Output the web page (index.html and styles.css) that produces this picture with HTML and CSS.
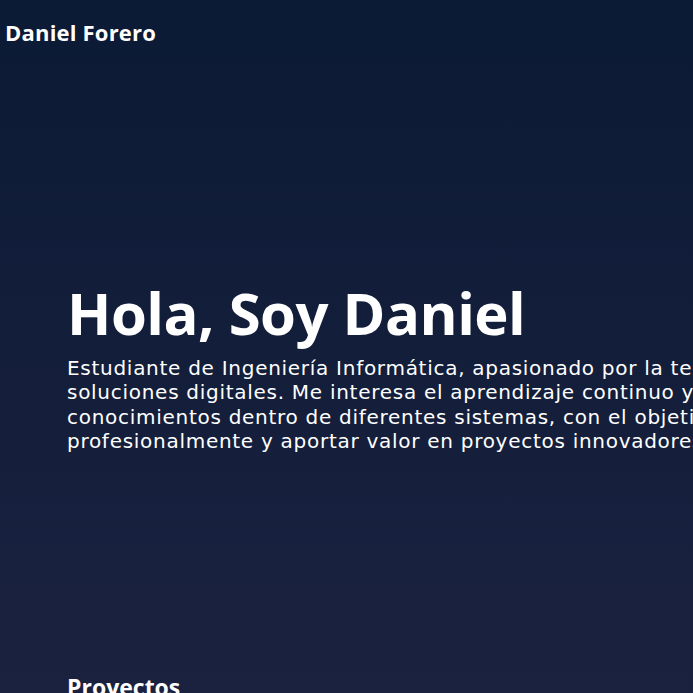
FILE: index.html
```html
<!DOCTYPE html>
<html lang="es">
<head>
<meta charset="utf-8">
<title>Daniel Forero</title>
<link rel="stylesheet" href="styles.css">
</head>
<body>
<header class="site-header">
  <span class="brand">Daniel Forero</span>
</header>
<main>
  <section class="hero">
    <h1 class="hero-title">Hola, Soy Daniel</h1>
    <p class="hero-text">Estudiante de Ingeniería Informática, apasionado por la tecnología y el desarrollo de<br>soluciones digitales. Me interesa el aprendizaje continuo y la aplicación de<br>conocimientos dentro de diferentes sistemas, con el objetivo de crecer<br>profesionalmente y aportar valor en proyectos innovadores.</p>
  </section>
  <section class="projects">
    <h2 class="section-title">Proyectos</h2>
  </section>
</main>
</body>
</html>
```

FILE: styles.css
```css
html, body {
  margin: 0;
  padding: 0;
}
body {
  min-height: 100vh;
  overflow-x: hidden;
  background: linear-gradient(to bottom, #0b1a35 0%, #1b2240 100%);
  color: #ffffff;
  font-family: "Open Sans", "Liberation Sans", sans-serif;
}
.site-header {
  padding: 17px 5px 19px;
}
.brand {
  font-size: 22px;
  font-weight: 700;
  letter-spacing: 0.2px;
}
.hero {
  padding: 212px 67px 0;
}
.hero-title {
  margin: 0;
  font-size: 58px;
  font-weight: 700;
  line-height: 1.2;
  letter-spacing: -0.5px;
}
.hero-text {
  margin: 8px 0 0;
  font-family: "DejaVu Sans", "Open Sans", sans-serif;
  font-size: 20px;
  line-height: 24.6px;
  letter-spacing: 0.72px;
  white-space: nowrap;
}
.projects {
  padding: 217px 67px 0;
}
.section-title {
  margin: 0;
  font-size: 23px;
  font-weight: 700;
}
```
